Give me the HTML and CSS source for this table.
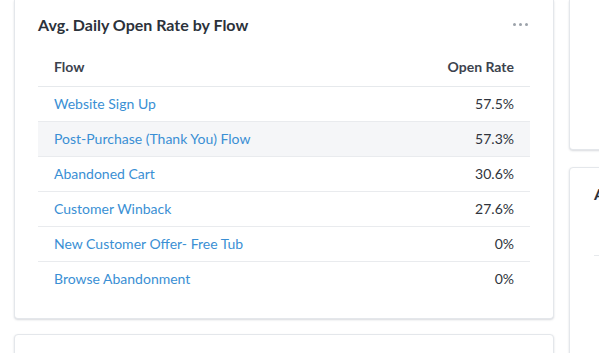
FILE: index.html
```html
<!DOCTYPE html>
<html>
<head>
<meta charset="utf-8">
<link rel="stylesheet" href="styles.css">
</head>
<body>
<div class="page">
  <div class="col-main">
    <section class="card card-flow">
      <div class="card-head">
        <h2 class="card-title">Avg. Daily Open Rate by Flow</h2>
        <span class="more"><i></i><i></i><i></i></span>
      </div>
      <table class="tbl">
        <thead>
          <tr><th class="c-name">Flow</th><th class="c-val">Open Rate</th></tr>
        </thead>
        <tbody>
          <tr><td class="c-name"><a>Website Sign Up</a></td><td class="c-val">57.5%</td></tr>
          <tr class="hover"><td class="c-name"><a>Post-Purchase (Thank You) Flow</a></td><td class="c-val">57.3%</td></tr>
          <tr><td class="c-name"><a>Abandoned Cart</a></td><td class="c-val">30.6%</td></tr>
          <tr><td class="c-name"><a>Customer Winback</a></td><td class="c-val">27.6%</td></tr>
          <tr><td class="c-name"><a>New Customer Offer- Free Tub</a></td><td class="c-val">0%</td></tr>
          <tr><td class="c-name"><a>Browse Abandonment</a></td><td class="c-val">0%</td></tr>
        </tbody>
      </table>
    </section>
    <section class="card card-next"></section>
  </div>
  <div class="col-side">
    <section class="card card-side1"></section>
    <section class="card card-side2">
      <h2 class="card-title side-title">Avg.</h2>
      <div class="side-rule"></div>
    </section>
  </div>
</div>
</body>
</html>
```
FILE: styles.css
```css
html, body {
  margin: 0;
  padding: 0;
  background: #ffffff;
}
body {
  font-family: "Lato", "Open Sans", sans-serif;
  color: #373d47;
  overflow: hidden;
  width: 599px;
  height: 353px;
}
.page {
  display: grid;
  grid-template-columns: 540px 240px;
  column-gap: 15px;
  padding-left: 14px;
}
.col-main, .col-side {
  display: flex;
  flex-direction: column;
}
.card {
  background: #fff;
  border: 1px solid #e4e7eb;
  border-radius: 4px;
  box-shadow: 0 1px 2px rgba(40, 50, 70, 0.18);
}
.card-flow {
  border-top: none;
  border-top-left-radius: 0;
  border-top-right-radius: 0;
  height: 319px;
  box-sizing: border-box;
  padding: 0 23px 0 23px;
}
.card-next {
  margin-top: 15px;
  height: 60px;
}
.card-head {
  display: flex;
  align-items: center;
  justify-content: space-between;
  height: 49px;
  padding-bottom: 1px;
  box-sizing: border-box;
}
.card-title {
  margin: 0;
  font-size: 16px;
  font-weight: 700;
  color: #2c323b;
  padding-left: 0;
}
.more {
  display: flex;
  gap: 3px;
  margin-right: 2px;
  padding-top: 1px;
}
.more i {
  width: 3px;
  height: 3px;
  border-radius: 50%;
  background: #9ca2aa;
}
.tbl {
  width: 100%;
  border-collapse: collapse;
  font-size: 14px;
}
.tbl th {
  height: 37px;
  box-sizing: border-box;
  font-weight: 700;
  color: #3c434e;
  border-bottom: 1px solid #e6e9ec;
  padding: 0 16px 1px;
}
.tbl td {
  height: 35px;
  box-sizing: border-box;
  border-bottom: 1px solid #e9ebee;
  padding: 0 16px 1px;
  color: #2f343c;
}
.tbl tbody tr:last-child td {
  border-bottom: none;
}
.tbl tr.hover td {
  background: #f5f6f8;
}
.c-name { text-align: left; }
.c-val { text-align: right; }
.tbl a {
  color: #3a8fd4;
  text-decoration: none;
}
.card-side1 {
  border-top: none;
  border-top-left-radius: 0;
  border-top-right-radius: 0;
  height: 150px;
  box-sizing: border-box;
}
.card-side2 {
  margin-top: 17px;
  height: 200px;
  padding: 16px 0 0 24px;
}
.side-rule {
  margin-top: 52px;
  border-top: 1px solid #e6e9ec;
}
```
